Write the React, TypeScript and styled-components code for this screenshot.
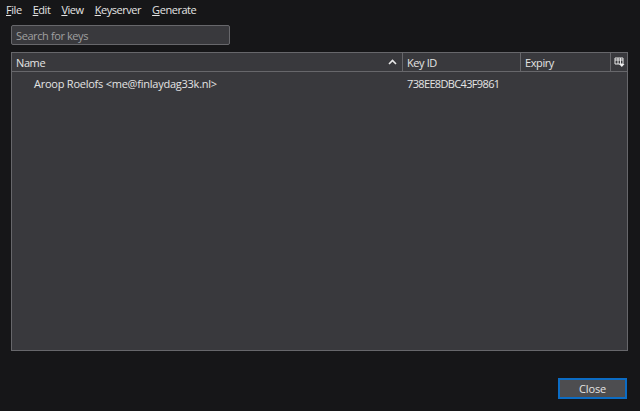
import styled, { createGlobalStyle } from "styled-components";

const GlobalStyle = createGlobalStyle`
  html, body {
    margin: 0;
    padding: 0;
    background: #161618;
  }
`;

const Window = styled.div`
  width: 640px;
  height: 411px;
  display: flex;
  flex-direction: column;
  background: #161618;
  color: #e4e4e4;
  font-family: "Open Sans", "Noto Sans", sans-serif;
  font-size: 11px;
  letter-spacing: -0.4px;
  overflow: hidden;
`;

const MenuBar = styled.div`
  display: flex;
  gap: 11px;
  height: 19px;
  padding: 0 0 0 6px;
  align-items: center;
  line-height: 19px;
`;

const MenuItem = styled.span`
  letter-spacing: -0.45px;
`;

const Mnemonic = styled.span`
  text-decoration: underline;
`;

const Search = styled.input`
  display: block;
  box-sizing: border-box;
  width: 219px;
  height: 20px;
  margin: 6px 0 0 11px;
  padding: 0 4px;
  background: #39393d;
  border: 1px solid #67676b;
  border-radius: 2px;
  color: #e4e4e4;
  font: inherit;
  letter-spacing: -0.4px;
  outline: none;

  &::placeholder {
    color: #a0a0a0;
    opacity: 1;
  }
`;

const Table = styled.div`
  box-sizing: border-box;
  width: 617px;
  height: 299px;
  margin: 7px 0 0 11px;
  background: #39393d;
  border: 1px solid #67676b;
  display: flex;
  flex-direction: column;
`;

const HeaderRow = styled.div`
  display: grid;
  grid-template-columns: 391px 118px 90px 1fr;
  height: 18px;
  border-bottom: 1px solid #67676b;
`;

const HeaderCell = styled.div`
  display: flex;
  align-items: center;
  justify-content: space-between;
  padding: 0 5px 0 4px;
  border-right: 1px solid #67676b;

  &:last-child {
    border-right: none;
    padding: 0;
    justify-content: center;
  }
`;

const BodyRow = styled.div`
  display: grid;
  grid-template-columns: 391px 1fr;
  height: 22px;
  align-items: center;
`;

const NameCell = styled.div`
  padding-left: 22px;
  letter-spacing: -0.24px;
`;

const KeyCell = styled.div`
  padding-left: 4px;
  letter-spacing: -0.65px;
`;

const Footer = styled.div`
  display: flex;
  justify-content: flex-end;
  padding: 27px 13px 0 0;
`;

const CloseButton = styled.button`
  box-sizing: border-box;
  width: 69px;
  height: 21px;
  padding: 0;
  background: #4d4d50;
  border: 2px solid #0c6cc4;
  color: #e4e4e4;
  font: inherit;
  letter-spacing: -0.1px;
`;

export default function App() {
  return (
    <Window>
      <GlobalStyle />
      <MenuBar>
        <MenuItem><Mnemonic>F</Mnemonic>ile</MenuItem>
        <MenuItem><Mnemonic>E</Mnemonic>dit</MenuItem>
        <MenuItem><Mnemonic>V</Mnemonic>iew</MenuItem>
        <MenuItem><Mnemonic>K</Mnemonic>eyserver</MenuItem>
        <MenuItem><Mnemonic>G</Mnemonic>enerate</MenuItem>
      </MenuBar>
      <Search placeholder="Search for keys" />
      <Table>
        <HeaderRow>
          <HeaderCell>
            Name
            <svg width="9" height="6" viewBox="0 0 9 6">
              <path d="M1 5l3.5-3.5L8 5" fill="none" stroke="#e8e8e8" strokeWidth="1.6" />
            </svg>
          </HeaderCell>
          <HeaderCell>Key ID</HeaderCell>
          <HeaderCell>Expiry</HeaderCell>
          <HeaderCell>
            <svg width="11" height="11" viewBox="0 0 11 11">
              <path d="M1 1h8v6H1zM4 1v6M6.500 1v6M1 3h8" fill="none" stroke="#e8e8e8" strokeWidth="1" />
              <path d="M5 7h5.500l-2.700 3z" fill="#f0f0f0" />
            </svg>
          </HeaderCell>
        </HeaderRow>
        <BodyRow>
          <NameCell>Aroop Roelofs &lt;me@finlaydag33k.nl&gt;</NameCell>
          <KeyCell>738EE8DBC43F9861</KeyCell>
        </BodyRow>
      </Table>
      <Footer>
        <CloseButton>Close</CloseButton>
      </Footer>
    </Window>
  );
}
